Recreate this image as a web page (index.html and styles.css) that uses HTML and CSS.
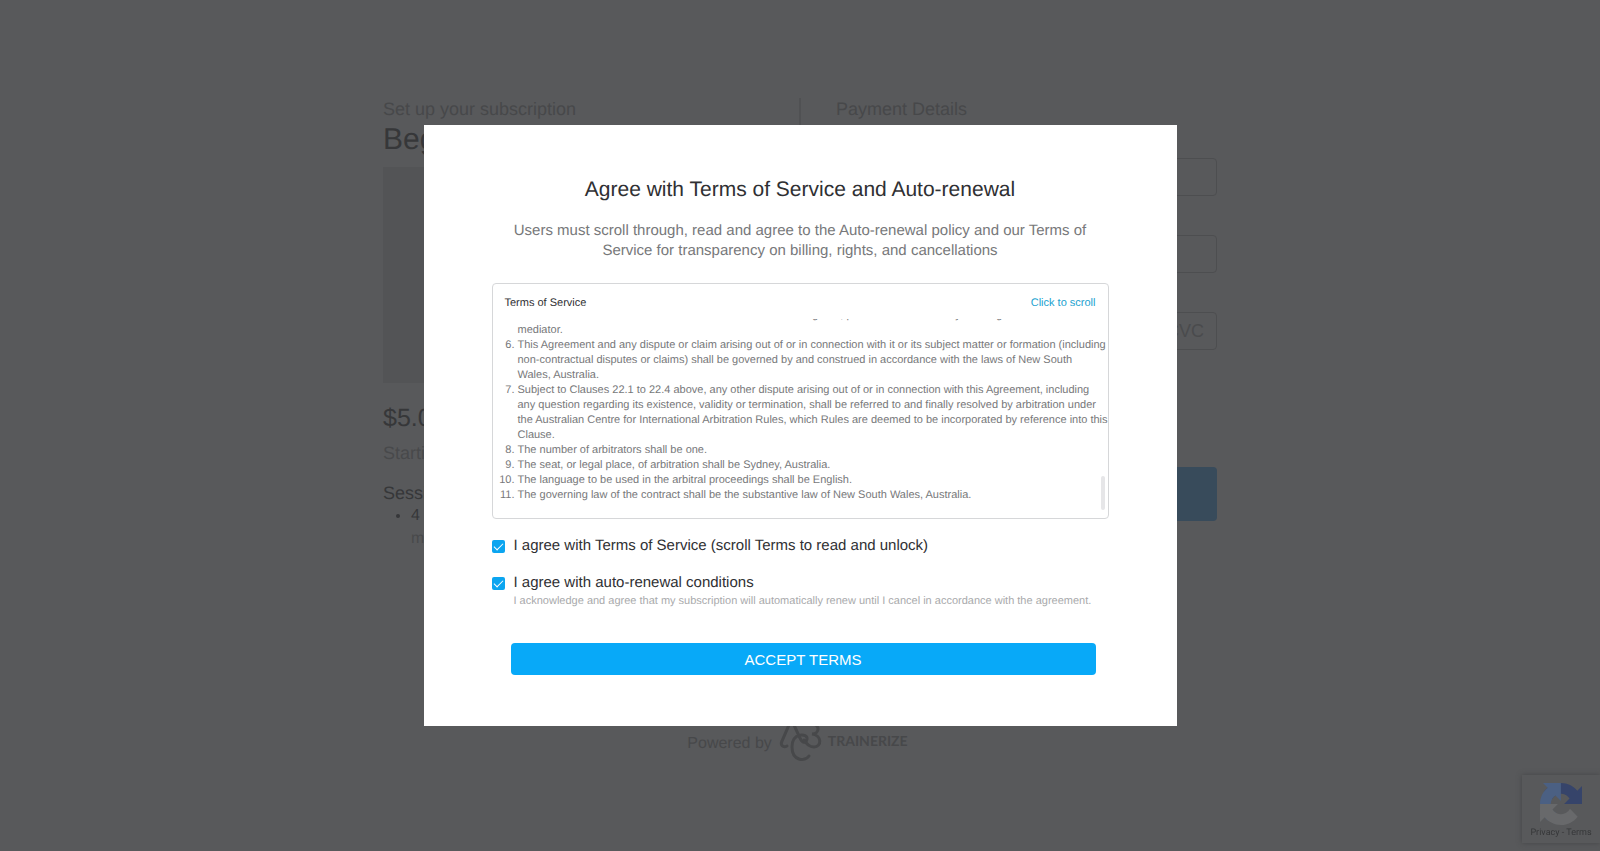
FILE: index.html
```html
<!DOCTYPE html>
<html lang="en">
<head>
	<meta charset="UTF-8">
	<title>Set up your subscription</title>
	<link rel="stylesheet" href="styles.css">
</head>
<body>
	<div class="page">
		<div class="columns">
			<div class="plan">
				<h2 class="section-title">Set up your subscription</h2>
				<h1 class="plan-name">Beginner</h1>
				<div class="plan-image"></div>
				<div class="price">$5.00</div>
				<div class="start">Starting today</div>
				<h3 class="sessions">Sessions</h3>
				<ul class="session-list">
					<li>4 sessions <span class="per">monthly</span></li>
				</ul>
			</div>
			<div class="payment">
				<h2 class="section-title">Payment Details</h2>
				<form class="pay-form">
					<input class="field" type="text" aria-label="Email">
					<input class="field" type="text" aria-label="Name on card">
					<input class="field cvc" type="text" aria-label="Card details" placeholder="CVC">
					<button class="pay" type="button" aria-label="Pay"></button>
				</form>
			</div>
		</div>
		<div class="powered">
			<span class="by">Powered by</span>
			<svg class="abc" width="44" height="42" viewBox="0 0 44 42" fill="none" stroke="currentColor" stroke-width="3" stroke-linecap="round">
				<path d="M9 26C5 28 2 25 4 21L11 5Q13 1 16 5L22 18C24 23 28 24 29 19C30 13 14 12 14 27C14 41 27 42 31 36"/>
				<path d="M22 4H34C42 4 42 14 34 14C44 15 44 27 36 27C31 27 29 24 26 20"/>
			</svg>
			<span class="brand">TRAINERIZE</span>
		</div>
	</div>

	<div class="captcha">
		<svg width="42" height="42" viewBox="0 0 64 64">
			<path fill="#36446a" d="M64 31.955l-.033-1.37V4.687l-7.16 7.16C50.948 4.674 42.033.093 32.05.093c-10.4 0-19.622 4.96-25.458 12.64l11.736 11.86a15.55 15.55 0 0 1 4.754-5.334c2.05-1.6 4.952-2.906 8.968-2.906.485 0 .86.057 1.135.163 4.976.393 9.288 3.14 11.828 7.124l-8.307 8.307L64 31.953"/>
			<path fill="#4b6083" d="M31.862.094l-1.37.033H4.594l7.16 7.16C4.58 13.147 0 22.06 0 32.046c0 10.4 4.96 19.622 12.64 25.458L24.5 45.768a15.55 15.55 0 0 1-5.334-4.754c-1.6-2.05-2.906-4.952-2.906-8.968 0-.485.057-.86.163-1.135.393-4.976 3.14-9.288 7.124-11.828l8.307 8.307L31.86.095"/>
			<path fill="#68696b" d="M0 32.045l.033 1.37v25.898l7.16-7.16c5.86 7.173 14.774 11.754 24.76 11.754 10.4 0 19.622-4.96 25.458-12.64l-11.736-11.86a15.55 15.55 0 0 1-4.754 5.334c-2.05 1.6-4.952 2.906-8.968 2.906-.485 0-.86-.057-1.135-.163-4.976-.393-9.288-3.14-11.828-7.124l8.307-8.307c-10.522.04-22.4.066-27.295-.005"/>
		</svg>
		<div class="captcha-links"><a href="#">Privacy</a> - <a href="#">Terms</a></div>
	</div>

	<div class="overlay">
		<div class="modal" role="dialog" aria-labelledby="modal-title">
			<h2 id="modal-title" class="modal-title">Agree with Terms of Service and Auto-renewal</h2>
			<p class="modal-text">Users must scroll through, read and agree to the Auto-renewal policy and our Terms of Service for transparency on billing, rights, and cancellations</p>
			<div class="terms">
				<div class="terms-head">
					<span>Terms of Service</span>
					<a href="#terms-end">Click to scroll</a>
				</div>
				<div class="terms-body">
					<ol class="clauses" start="5">
						<li>If the matter is not resolved at the first conference then it is agreed, provided that each may then sign a form for the<br>mediator.</li>
						<li>This Agreement and any dispute or claim arising out of or in connection with it or its subject matter or formation (including<br>non-contractual disputes or claims) shall be governed by and construed in accordance with the laws of New South<br>Wales, Australia.</li>
						<li>Subject to Clauses 22.1 to 22.4 above, any other dispute arising out of or in connection with this Agreement, including<br>any question regarding its existence, validity or termination, shall be referred to and finally resolved by arbitration under<br>the Australian Centre for International Arbitration Rules, which Rules are deemed to be incorporated by reference into this<br>Clause.</li>
						<li>The number of arbitrators shall be one.</li>
						<li>The seat, or legal place, of arbitration shall be Sydney, Australia.</li>
						<li>The language to be used in the arbitral proceedings shall be English.</li>
						<li id="terms-end">The governing law of the contract shall be the substantive law of New South Wales, Australia.</li>
					</ol>
					<span class="thumb"></span>
				</div>
			</div>
			<div class="agree">
				<input type="checkbox" id="agree-terms" checked>
				<label for="agree-terms">I agree with Terms of Service (scroll Terms to read and unlock)</label>
			</div>
			<div class="agree">
				<input type="checkbox" id="agree-renew" checked>
				<label for="agree-renew">I agree with auto-renewal conditions</label>
			</div>
			<p class="agree-note">I acknowledge and agree that my subscription will automatically renew until I cancel in accordance with the agreement.</p>
			<button class="accept" type="button">ACCEPT TERMS</button>
		</div>
	</div>
</body>
</html>
```

FILE: styles.css
```css
*{margin:0;padding:0;box-sizing:border-box;}
body{
	font-family:"Liberation Sans",Arial,sans-serif;
	font-size:15px;
	color:#363739;
	background:#58595b;
	text-rendering:geometricPrecision;
}
a{text-decoration:none;color:inherit;}
h1,h2,h3{font-weight:normal;}

/* page behind the dialog */
.page{
	min-height:100vh;
	padding-top:98px;
	overflow:hidden;
}
.columns{
	display:flex;
	width:834px;
	margin:0 auto;
}
.plan{
	width:418px;
	height:600px;
	border-right:2px solid #505153;
}
.payment{
	flex:1;
	padding-left:35px;
}
.section-title{
	font-size:18px;
	line-height:22px;
	color:#47484a;
}
.plan-name{
	font-size:30px;
	line-height:40px;
}
.plan-image{
	width:380px;
	height:216px;
	margin-top:7px;
	background:#535456;
}
.price{
	margin-top:18px;
	font-size:25px;
	line-height:34px;
}
.start{
	margin-top:7px;
	font-size:18px;
	line-height:22px;
	color:#48494b;
}
.sessions{
	margin-top:18px;
	font-size:18px;
	line-height:22px;
}
.session-list{
	padding-left:28px;
	font-size:16px;
	line-height:23px;
}
.per{
	display:block;
	color:#48494b;
}
.pay-form{
	display:flex;
	flex-direction:column;
	padding-top:38px;
}
.field{
	height:38px;
	margin-bottom:39px;
	padding:0 12px;
	border:1px solid #4d4e50;
	border-radius:4px;
	background:none;
	font:18px "Liberation Sans",Arial,sans-serif;
}
.cvc{text-align:right;}
.cvc::placeholder{color:#4a4b4d;}
.pay{
	height:54px;
	margin-top:78px;
	border:0;
	border-radius:4px;
	background:#384b5b;
}
.powered{
	display:flex;
	align-items:center;
	justify-content:center;
	gap:6px;
	margin-top:22px;
	padding-right:5px;
	font-size:16px;
	line-height:18px;
	color:#47484a;
}
.by{padding-top:6px;}
.brand{
	font-family:Lato,sans-serif;
	font-weight:bold;
	font-size:14px;
}
.captcha{
	position:fixed;
	right:0;
	bottom:8px;
	width:78px;
	height:68px;
	padding-top:8px;
	text-align:center;
	box-shadow:0 0 5px #444547;
}
.captcha svg{
	display:block;
	margin:0 auto;
}
.captcha-links{
	font:9px/16px Roboto,sans-serif;
	color:#363739;
}

/* dialog */
.overlay{
	position:fixed;
	top:0;
	left:0;
	right:0;
	bottom:0;
	display:flex;
	align-items:center;
	justify-content:center;
}
.modal{
	width:753px;
	padding:51px 68px;
	background:#fff;
	color:#2f3033;
}
.modal-title{
	font-size:21px;
	line-height:28px;
	text-align:center;
}
.modal-text{
	margin:17px 0 22px;
	font-size:15px;
	line-height:20px;
	text-align:center;
	color:#77787a;
}
.terms{
	padding:12px 0 8px;
	border:1px solid #d6d7d9;
	border-radius:4px;
}
.terms-head,.clauses,.agree-note{font-size:11px;}
.terms-head{
	display:flex;
	justify-content:space-between;
	padding:0 12px;
	line-height:14px;
}
.terms-head a{color:#1ba2cf;}
.terms-body{
	position:relative;
	display:flex;
	flex-direction:column;
	justify-content:flex-end;
	height:191px;
	margin-top:9px;
	padding-bottom:7px;
	overflow:hidden;
}
.clauses{
	padding-left:25px;
	line-height:15px;
	white-space:nowrap;
	color:#77787a;
}
.thumb{
	position:absolute;
	right:3px;
	bottom:0;
	width:4px;
	height:34px;
	border-radius:2px;
	background:#e6e6e8;
}
.agree{
	display:flex;
	align-items:center;
	gap:9px;
	margin-top:17px;
	line-height:20px;
}
.agree input{
	appearance:none;
	display:flex;
	justify-content:center;
	width:13px;
	height:13px;
	border-radius:2px;
	background:#0ba5f0;
}
.agree input:checked::before{
	content:"";
	width:4px;
	height:8px;
	margin-top:1px;
	border:solid #fff;
	border-width:0 1px 1px 0;
	transform:rotate(45deg);
}
.agree-note{
	padding-left:22px;
	line-height:16px;
	color:#a9aaac;
}
.accept{
	display:block;
	width:585px;
	height:32px;
	margin:34px 0 0 19px;
	border:0;
	border-radius:4px;
	background:#08a9f8;
	font:15px "Liberation Sans",Arial,sans-serif;
	color:#fff;
}
```
